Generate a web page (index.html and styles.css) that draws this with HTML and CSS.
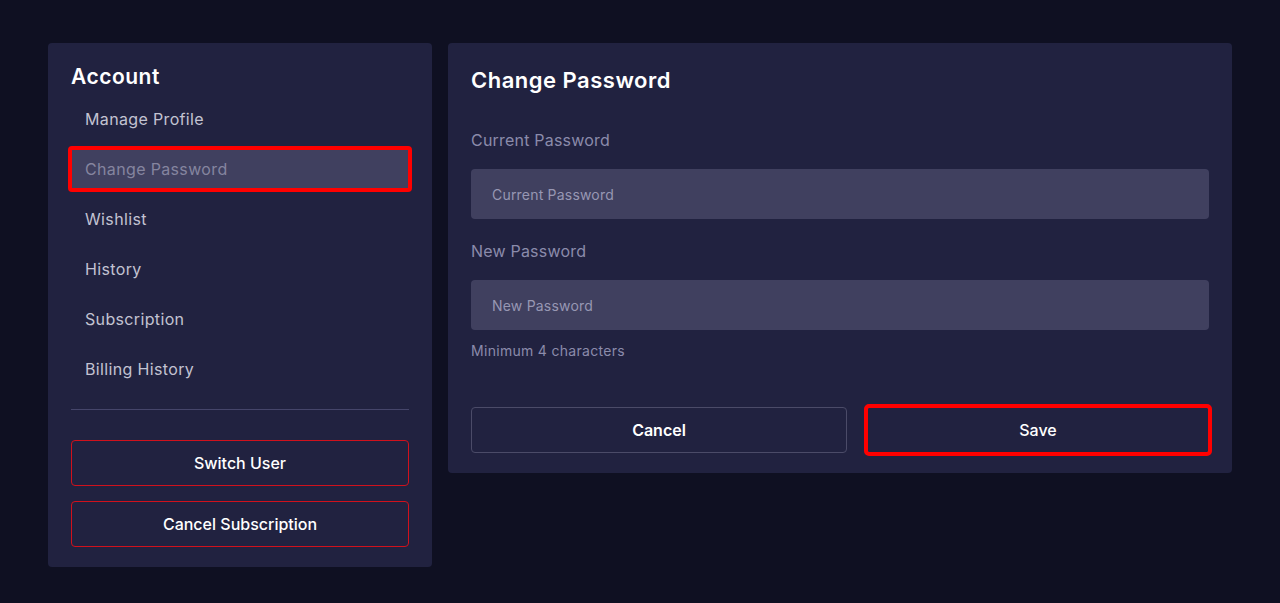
FILE: index.html
```html
<!DOCTYPE html>
<html lang="en">
<head>
<meta charset="utf-8">
<title>Change Password</title>
<link rel="stylesheet" href="styles.css">
</head>
<body>
<div class="page">
  <aside class="card sidebar">
    <h2 class="side-title">Account</h2>
    <nav class="menu">
      <a class="menu-item">Manage Profile</a>
      <a class="menu-item active">Change Password</a>
      <a class="menu-item">Wishlist</a>
      <a class="menu-item">History</a>
      <a class="menu-item">Subscription</a>
      <a class="menu-item">Billing History</a>
    </nav>
    <hr class="divider">
    <div class="side-actions">
      <button class="btn btn-danger">Switch User</button>
      <button class="btn btn-danger">Cancel Subscription</button>
    </div>
  </aside>
  <main class="card content">
    <h1 class="content-title">Change Password</h1>
    <label class="field-label">Current Password</label>
    <input class="field-input" type="password" placeholder="Current Password">
    <label class="field-label second">New Password</label>
    <input class="field-input" type="password" placeholder="New Password">
    <div class="hint">Minimum 4 characters</div>
    <div class="actions">
      <button class="btn btn-ghost">Cancel</button>
      <button class="btn btn-save">Save</button>
    </div>
  </main>
</div>
</body>
</html>
```

FILE: styles.css
```css
* { box-sizing: border-box; }
html, body {
  margin: 0;
  padding: 0;
  background: #0f1022;
  font-family: "Inter", "Noto Sans", sans-serif;
  color: #ffffff;
}
.page {
  display: flex;
  align-items: flex-start;
  gap: 16px;
  padding: 43px 48px;
}
.card {
  background: #212240;
  border-radius: 4px;
}
.sidebar {
  width: 384px;
  padding: 20px 23px 20px 23px;
  display: flex;
  flex-direction: column;
}
.side-title {
  margin: 0;
  font-size: 21px;
  line-height: 28px;
  font-weight: 600;
  letter-spacing: 0.5px;
  color: #ffffff;
}
.menu {
  margin-top: 8px;
  display: flex;
  flex-direction: column;
  gap: 10px;
}
.menu-item {
  display: flex;
  align-items: center;
  height: 40px;
  padding-left: 14px;
  font-size: 16px;
  letter-spacing: 0.35px;
  color: #c3c3d2;
  cursor: pointer;
}
.menu-item.active {
  background: #40405f;
  color: #85859f;
  outline: 4px solid #ff0000;
  outline-offset: -1px;
  border-radius: 1px;
}
.divider {
  margin: 20px 0 0 0;
  border: 0;
  border-top: 1px solid #45456a;
  height: 0;
}
.side-actions {
  margin-top: 30px;
  display: flex;
  flex-direction: column;
  gap: 15px;
}
.btn {
  height: 46px;
  width: 100%;
  border-radius: 4px;
  background: transparent;
  font-family: inherit;
  font-size: 16px;
  font-weight: 500;
  color: #ffffff;
  cursor: pointer;
}
.btn-danger {
  border: 1px solid #d0111c;
}
.content {
  flex: 1;
  padding: 21px 23px 20px 23px;
  display: flex;
  flex-direction: column;
}
.content-title {
  margin: 0;
  font-size: 22px;
  line-height: 32px;
  font-weight: 600;
  letter-spacing: 0.5px;
  color: #ffffff;
}
.field-label {
  margin-top: 32px;
  font-size: 16px;
  line-height: 24px;
  letter-spacing: 0.2px;
  color: #8b8bab;
}
.field-label.second {
  margin-top: 20px;
}
.field-input {
  margin-top: 17px;
  height: 50px;
  width: 100%;
  border: 0;
  border-radius: 4px;
  background: #40405f;
  padding: 0 21px;
  font-family: inherit;
  font-size: 14px;
  letter-spacing: 0.2px;
  color: #ffffff;
  outline: none;
}
.field-input::placeholder {
  color: #9797b3;
}
.hint {
  margin-top: 11px;
  font-size: 14px;
  line-height: 20px;
  letter-spacing: 0.3px;
  color: #8b8bab;
}
.actions {
  margin-top: 46px;
  display: grid;
  grid-template-columns: 376px 1fr;
  gap: 20px;
}
.btn-ghost {
  border: 1px solid #4b4b68;
  font-weight: 600;
}
.btn-save {
  border: 1px solid #4b4b68;
  outline: 4px solid #ff0000;
  outline-offset: -1px;
  border-radius: 2px;
  font-weight: 500;
}
```
